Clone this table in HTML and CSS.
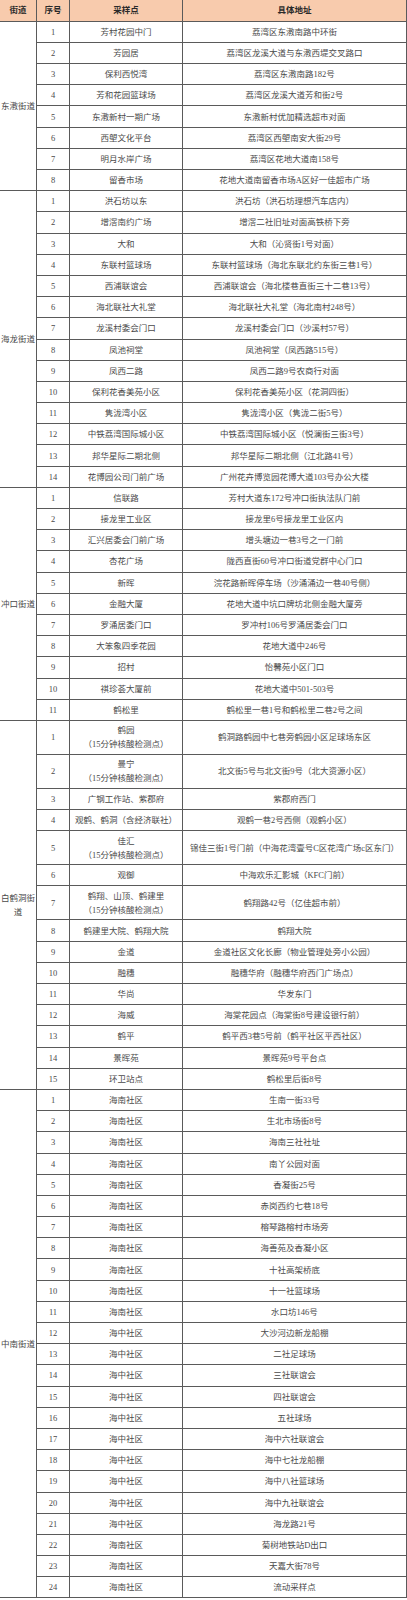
FILE: index.html
```html
<!DOCTYPE html>
<html lang="zh-CN">
<head>
<meta charset="utf-8">
<title>采样点</title>
<link rel="stylesheet" href="styles.css">
</head>
<body>
<table class="sheet">
<colgroup><col class="c1"><col class="c2"><col class="c3"><col class="c4"></colgroup>
<thead>
<tr class="head"><th>街道</th><th>序号</th><th>采样点</th><th>具体地址</th></tr>
</thead>
<tbody>
<tr><td class="street" rowspan="8">东漖街道</td><td>1</td><td>芳村花园中门</td><td>荔湾区东漖南路中环街</td></tr>
<tr><td>2</td><td>芳园居</td><td>荔湾区龙溪大道与东漖西堤交叉路口</td></tr>
<tr><td>3</td><td>保利西悦湾</td><td>荔湾区东漖南路182号</td></tr>
<tr><td>4</td><td>芳和花园篮球场</td><td>荔湾区龙溪大道芳和街2号</td></tr>
<tr><td>5</td><td>东漖新村一期广场</td><td>东漖新村优加精选超市对面</td></tr>
<tr><td>6</td><td>西塱文化平台</td><td>荔湾区西塱南安大街29号</td></tr>
<tr><td>7</td><td>明月水岸广场</td><td>荔湾区花地大道南158号</td></tr>
<tr><td>8</td><td>留香市场</td><td>花地大道南留香市场A区好一佳超市广场</td></tr>

<tr><td class="street" rowspan="14">海龙街道</td><td>1</td><td>洪石坊以东</td><td>洪石坊（洪石坊理想汽车店内）</td></tr>
<tr><td>2</td><td>增滘南约广场</td><td>增滘二社旧址对面高铁桥下旁</td></tr>
<tr><td>3</td><td>大和</td><td>大和（沁贤街1号对面）</td></tr>
<tr><td>4</td><td>东联村篮球场</td><td>东联村篮球场（海北东联北约东街三巷1号）</td></tr>
<tr><td>5</td><td>西浦联谊会</td><td>西浦联谊会（海北楼巷直街三十二巷13号）</td></tr>
<tr><td>6</td><td>海北联社大礼堂</td><td>海北联社大礼堂（海北南村248号）</td></tr>
<tr><td>7</td><td>龙溪村委会门口</td><td>龙溪村委会门口（沙溪村57号）</td></tr>
<tr><td>8</td><td>凤池祠堂</td><td>凤池祠堂（凤西路515号）</td></tr>
<tr><td>9</td><td>凤西二路</td><td>凤西二路9号农商行对面</td></tr>
<tr><td>10</td><td>保利花香美苑小区</td><td>保利花香美苑小区（花洞四街）</td></tr>
<tr><td>11</td><td>隽泷湾小区</td><td>隽泷湾小区（隽泷二街5号）</td></tr>
<tr><td>12</td><td>中铁荔湾国际城小区</td><td>中铁荔湾国际城小区（悦澜街三街3号）</td></tr>
<tr><td>13</td><td>邦华星际二期北侧</td><td>邦华星际二期北侧（江北路41号）</td></tr>
<tr><td>14</td><td>花博园公司门前广场</td><td>广州花卉博览园花博大道103号办公大楼</td></tr>

<tr><td class="street" rowspan="11">冲口街道</td><td>1</td><td>信联路</td><td>芳村大道东172号冲口街执法队门前</td></tr>
<tr><td>2</td><td>接龙里工业区</td><td>接龙里6号接龙里工业区内</td></tr>
<tr><td>3</td><td>汇兴居委会门前广场</td><td>增头塘边一巷3号之一门前</td></tr>
<tr><td>4</td><td>杏花广场</td><td>陇西直街60号冲口街道党群中心门口</td></tr>
<tr><td>5</td><td>新晖</td><td>浣花路新晖停车场（沙涌涌边一巷40号侧）</td></tr>
<tr><td>6</td><td>金融大厦</td><td>花地大道中坑口牌坊北侧金融大厦旁</td></tr>
<tr><td>7</td><td>罗涌居委门口</td><td>罗冲村106号罗涌居委会门口</td></tr>
<tr><td>8</td><td>大笨象四季花园</td><td>花地大道中246号</td></tr>
<tr><td>9</td><td>招村</td><td>怡馨苑小区门口</td></tr>
<tr><td>10</td><td>祺珍荟大厦前</td><td>花地大道中501-503号</td></tr>
<tr><td>11</td><td>鹤松里</td><td>鹤松里一巷1号和鹤松里二巷2号之间</td></tr>

<tr class="tall"><td class="street" rowspan="15">白鹤洞街<br>道</td><td>1</td><td>鹤园<br>（15分钟核酸检测点）</td><td>鹤洞路鹤园中七巷旁鹤园小区足球场东区</td></tr>
<tr class="tall"><td>2</td><td>曼宁<br>（15分钟核酸检测点）</td><td>北文街5号与北文街9号（北大资源小区）</td></tr>
<tr><td>3</td><td>广钢工作站、紫郡府</td><td>紫郡府西门</td></tr>
<tr><td>4</td><td>观鹤、鹤洞（含经济联社）</td><td>观鹤一巷2号西侧（观鹤小区）</td></tr>
<tr class="tall"><td>5</td><td>佳汇<br>（15分钟核酸检测点）</td><td>锦佳三街1号门前（中海花湾壹号C区花湾广场c区东门）</td></tr>
<tr><td>6</td><td>观御</td><td>中海欢乐汇影城（KFC门前）</td></tr>
<tr class="tall"><td>7</td><td>鹤翔、山顶、鹤建里<br>（15分钟核酸检测点）</td><td>鹤翔路42号（亿佳超市前）</td></tr>
<tr><td>8</td><td>鹤建里大院、鹤翔大院</td><td>鹤翔大院</td></tr>
<tr><td>9</td><td>金道</td><td>金道社区文化长廊（物业管理处旁小公园）</td></tr>
<tr><td>10</td><td>融穗</td><td>融穗华府（融穗华府西门广场点）</td></tr>
<tr><td>11</td><td>华尚</td><td>华发东门</td></tr>
<tr><td>12</td><td>海威</td><td>海棠花园点（海棠街8号建设银行前）</td></tr>
<tr><td>13</td><td>鹤平</td><td>鹤平西3巷5号前（鹤平社区平西社区）</td></tr>
<tr><td>14</td><td>景晖苑</td><td>景晖苑9号平台点</td></tr>
<tr><td>15</td><td>环卫站点</td><td>鹤松里后街8号</td></tr>

<tr><td class="street" rowspan="24">中南街道</td><td>1</td><td>海南社区</td><td>生南一街33号</td></tr>
<tr><td>2</td><td>海南社区</td><td>生北市场街8号</td></tr>
<tr><td>3</td><td>海南社区</td><td>海南三社社址</td></tr>
<tr><td>4</td><td>海南社区</td><td>南丫公园对面</td></tr>
<tr><td>5</td><td>海南社区</td><td>香凝街25号</td></tr>
<tr><td>6</td><td>海南社区</td><td>赤岗西约七巷18号</td></tr>
<tr><td>7</td><td>海南社区</td><td>榕琴路榕村市场旁</td></tr>
<tr><td>8</td><td>海南社区</td><td>海善苑及香凝小区</td></tr>
<tr><td>9</td><td>海南社区</td><td>十社高架桥底</td></tr>
<tr><td>10</td><td>海南社区</td><td>十一社篮球场</td></tr>
<tr><td>11</td><td>海南社区</td><td>水口坊146号</td></tr>
<tr><td>12</td><td>海中社区</td><td>大沙河边新龙船棚</td></tr>
<tr><td>13</td><td>海中社区</td><td>二社足球场</td></tr>
<tr><td>14</td><td>海中社区</td><td>三社联谊会</td></tr>
<tr><td>15</td><td>海中社区</td><td>四社联谊会</td></tr>
<tr><td>16</td><td>海中社区</td><td>五社球场</td></tr>
<tr><td>17</td><td>海中社区</td><td>海中六社联谊会</td></tr>
<tr><td>18</td><td>海中社区</td><td>海中七社龙船棚</td></tr>
<tr><td>19</td><td>海中社区</td><td>海中八社篮球场</td></tr>
<tr><td>20</td><td>海中社区</td><td>海中九社联谊会</td></tr>
<tr><td>21</td><td>海中社区</td><td>海龙路21号</td></tr>
<tr><td>22</td><td>海南社区</td><td>菊树地铁站D出口</td></tr>
<tr><td>23</td><td>海南社区</td><td>天嘉大街78号</td></tr>
<tr><td>24</td><td>海南社区</td><td>流动采样点</td></tr>
</tbody>
</table>
</body>
</html>
```
FILE: styles.css
```css
html, body {
  margin: 0;
  padding: 0;
  background: #ffffff;
}

.sheet {
  width: 407px;
  table-layout: fixed;
  border-collapse: separate;
  border-spacing: 0;
  font-family: "Liberation Serif", "Noto Sans CJK SC", serif;
  font-size: 8.5px;
  color: #4a4a4a;
}

.sheet .c1 { width: 37px; }
.sheet .c2 { width: 33px; }
.sheet .c3 { width: 113px; }
.sheet .c4 { width: 224px; }

.sheet th,
.sheet td {
  border-right: 1px solid #5a5a5a;
  border-bottom: 1px solid #5a5a5a;
  padding: 0 1px;
  text-align: center;
  vertical-align: middle;
  line-height: 12px;
  white-space: nowrap;
  overflow: visible;
}

.sheet thead th {
  background: #f8cbad;
  color: #2a2a2a;
  font-weight: bold;
}

.sheet tr {
  height: 21.2px;
}

.sheet tr.head {
  height: 21.7px;
}

.sheet tr.tall {
  height: 34px;
}

.sheet tr.tall td {
  line-height: 14px;
}

.sheet td.street {
  padding: 0;
  line-height: 12px;
}
```
